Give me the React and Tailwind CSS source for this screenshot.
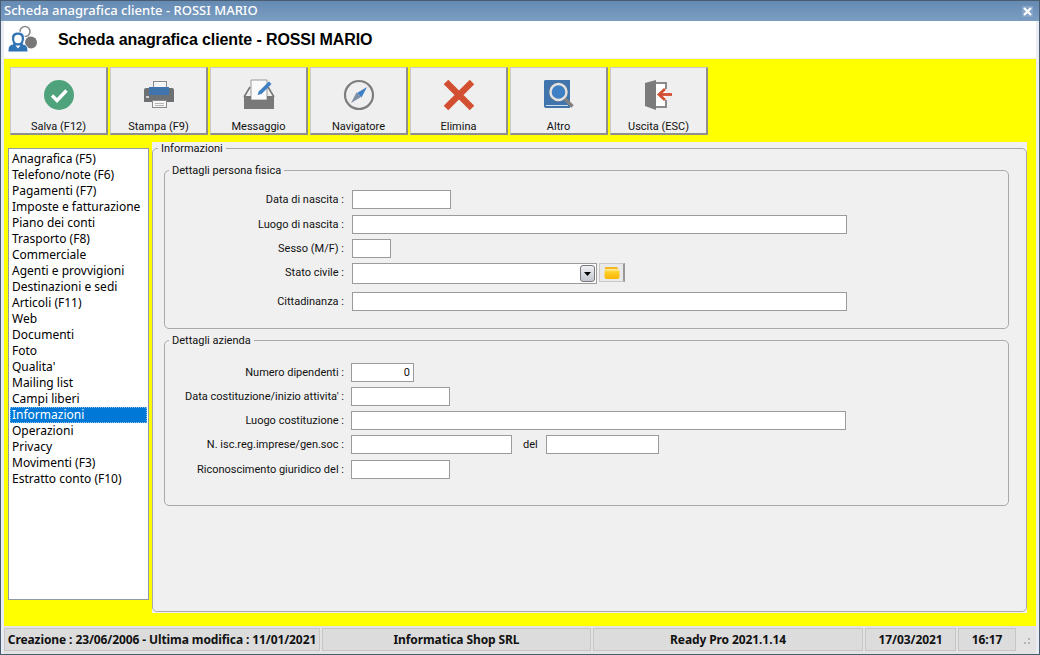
const tahoma = '"Noto Sans", "Liberation Sans", sans-serif';
const narrow = 'Roboto, "Liberation Sans", sans-serif';

function SaveIcon() {
  return (
    <svg width="32" height="32" viewBox="0 0 32 32">
      <circle cx="16" cy="16" r="15" fill="#4fa37c" />
      <path d="M9 16.500l5 5 9.500-10" fill="none" stroke="#fff" strokeWidth="3.4" />
    </svg>
  );
}

function PrintIcon() {
  return (
    <svg width="32" height="32" viewBox="0 0 32 32">
      <rect x="10.500" y="2.500" width="13" height="7" fill="#f6f6f6" stroke="#8a8a8a" />
      <path d="M3 9h26a2 2 0 0 1 2 2v12H1V11a2 2 0 0 1 2-2z" fill="#6e7173" />
      <rect x="6" y="8" width="20" height="8" fill="#3f74ad" />
      <rect x="3" y="17" width="3" height="2" fill="#d0d0d0" />
      <rect x="9.500" y="21.500" width="14" height="7" fill="#f6f6f6" stroke="#8a8a8a" />
      <path d="M12 24.500h9M12 26.500h9" stroke="#b5b5b5" />
    </svg>
  );
}

function MessageIcon() {
  return (
    <svg width="32" height="32" viewBox="0 0 32 32">
      <path d="M8 1h16v20H8z" fill="#fafafa" stroke="#9a9a9a" />
      <path d="M7 8L1 18M25 8l6 10" stroke="#787878" strokeWidth="1.6" />
      <path d="M1 17h7v4h16v-4h7v13H1z" fill="#787878" />
      <path d="M14.500 16l1.200-3.500L26 2.500l2.500 2.500-10 10z" fill="#3f7fc4" />
    </svg>
  );
}

function CompassIcon() {
  return (
    <svg width="32" height="32" viewBox="0 0 32 32">
      <circle cx="16" cy="16" r="14" fill="none" stroke="#7d7d7d" strokeWidth="2.2" />
      <path d="M24 8L18.500 18.500 14 14z" fill="#3f7fc4" />
      <path d="M8 24l5.500-10.500L18 18z" fill="#7d8fa5" />
    </svg>
  );
}

function DeleteIcon() {
  return (
    <svg width="32" height="32" viewBox="0 0 32 32">
      <path d="M3 3l26 26M29 3L3 29" stroke="#d24f31" strokeWidth="6.4" />
    </svg>
  );
}

function OtherIcon() {
  return (
    <svg width="32" height="32" viewBox="0 0 32 32">
      <path d="M2 1h25v28H3a2 2 0 0 1-2-2V2z" fill="#3f74ad" />
      <path d="M3 26.500h22" stroke="#cfdded" />
      <path d="M21.500 19.500l8 8" stroke="#808080" strokeWidth="3.6" />
      <circle cx="15.500" cy="13" r="9.600" fill="#777" />
      <circle cx="15.500" cy="13" r="8" fill="#3f7fc4" stroke="#e2e2e2" strokeWidth="2.400" />
    </svg>
  );
}

function ExitIcon() {
  return (
    <svg width="32" height="32" viewBox="0 0 32 32">
      <path d="M13 4h10v24H13z" fill="#fff" />
      <path d="M13 4h10v6M23 21v7H13" fill="none" stroke="#8a8a8a" strokeWidth="2" />
      <path d="M2 4l11-3v30L2 27z" fill="#7b7b7b" />
      <path d="M29 15.500H18" stroke="#d24f31" strokeWidth="2.8" />
      <path d="M22 10l-6 5.500 6 5.500" fill="none" stroke="#d24f31" strokeWidth="2.8" />
    </svg>
  );
}

function CustomerIcon() {
  return (
    <svg width="30" height="30" viewBox="0 0 30 30" className="block">
      <circle cx="18" cy="6.500" r="5" fill="#fff" stroke="#8a8a8a" strokeWidth="1.600" />
      <path d="M21 12c2 1 3 2 3.500 3" fill="none" stroke="#8a8a8a" strokeWidth="1.400" />
      <circle cx="24" cy="17.500" r="6" fill="#777" />
      <path
        d="M1 27c0-5 1-7 5-8-1-2-1.500-4-1.500-6 0-4 3-6 6.500-6s6.500 2 6.500 6c0 2-.5 4-1.500 6 4 1 5 3 5 8z"
        fill="#2f73b5"
        stroke="#fff"
        strokeWidth="1"
      />
      <ellipse cx="11" cy="14" rx="3.800" ry="4.200" fill="#fff" />
      <path d="M8.500 20.500L11 23.500l2.500-3z" fill="#fff" />
    </svg>
  );
}

function FolderIcon() {
  return (
    <svg width="16" height="12" viewBox="0 0 16 12">
      <defs>
        <linearGradient id="folder" x1="0" y1="0" x2="0" y2="1">
          <stop offset="0" stopColor="#fff0a8" />
          <stop offset="0.3" stopColor="#ffd02a" />
          <stop offset="1" stopColor="#fbb400" />
        </linearGradient>
      </defs>
      <path d="M2 0h10a2 2 0 0 1 2 2v1H1V1a1 1 0 0 1 1-1z" fill="#f2b71c" />
      <rect x="0.500" y="2" width="15" height="10" rx="2.500" fill="url(#folder)" />
    </svg>
  );
}

const tools = [
  { label: 'Salva (F12)', icon: <SaveIcon /> },
  { label: 'Stampa (F9)', icon: <PrintIcon /> },
  { label: 'Messaggio', icon: <MessageIcon /> },
  { label: 'Navigatore', icon: <CompassIcon /> },
  { label: 'Elimina', icon: <DeleteIcon /> },
  { label: 'Altro', icon: <OtherIcon /> },
  { label: 'Uscita (ESC)', icon: <ExitIcon /> },
];

const menu = [
  'Anagrafica (F5)', 'Telefono/note (F6)', 'Pagamenti (F7)', 'Imposte e fatturazione', 'Piano dei conti',
  'Trasporto (F8)', 'Commerciale', 'Agenti e provvigioni', 'Destinazioni e sedi', 'Articoli (F11)', 'Web',
  'Documenti', 'Foto', "Qualita'", 'Mailing list', 'Campi liberi', 'Informazioni', 'Operazioni', 'Privacy',
  'Movimenti (F3)', 'Estratto conto (F10)',
];

function Field({ className = '', children }) {
  return (
    <div className={`h-[19px] bg-white border border-[#9b9b9b] text-[11px] text-right pr-[3px] leading-[17px] shrink-0 ${className}`}>
      {children}
    </div>
  );
}

function Row({ label, className = '', labelClass = 'pt-[2px]', children }) {
  return (
    <div className={`flex items-center ${className}`}>
      <div className={`w-[179px] text-right shrink-0 whitespace-nowrap ${labelClass}`}>{label} :</div>
      {children}
    </div>
  );
}

function Group({ title, className = '', children }) {
  return (
    <fieldset className={`border border-[#a9a9a9] rounded-[5px] ml-[11px] mr-[17px] ${className}`}>
      <legend className="ml-[4px] px-[3px] leading-[13px] text-[#111]">{title}</legend>
      {children}
    </fieldset>
  );
}

function StatusCell({ className = '', children }) {
  return (
    <div className={`h-[23px] flex items-center justify-center bg-[#dcdcdc] border border-[#c6c6c6] whitespace-nowrap shrink-0 ${className}`}>
      {children}
    </div>
  );
}

export default function App() {
  return (
    <div
      className="w-[1040px] h-[655px] flex flex-col bg-[#e9edf2] border border-[#4a5c72] overflow-hidden text-[11px] text-[#111]"
      style={{ fontFamily: narrow }}
    >
      <div
        className="h-[20px] shrink-0 flex items-center justify-between pl-[3px] pr-[6px] bg-gradient-to-b from-[#658bb3] to-[#7b9dc2] text-white text-[13px] font-medium"
        style={{ fontFamily: tahoma }}
      >
        <span>Scheda anagrafica cliente - ROSSI MARIO</span>
        <span className="w-[11px] h-[11px] flex items-center justify-center bg-[#86a5c8]">
          <svg width="9" height="9" viewBox="0 0 9 9">
            <path d="M1 1l7 7M8 1L1 8" stroke="#fff" strokeWidth="2.2" />
          </svg>
        </span>
      </div>

      <div className="h-[37px] shrink-0 flex items-center bg-white mx-[3px] pl-[3px]">
        <CustomerIcon />
        <div
          className="ml-[21px] font-bold text-[16px] tracking-[-0.1px] text-black"
          style={{ fontFamily: '"Liberation Sans", sans-serif' }}
        >
          Scheda anagrafica cliente - ROSSI MARIO
        </div>
      </div>

      <div className="flex-1 min-h-0 mt-[1px] mx-[3px] bg-[#ffff00] flex flex-col pt-[8px]">
        <div className="flex gap-[2px] pl-[6px] h-[68px] shrink-0">
          {tools.map((t) => (
            <div
              key={t.label}
              className="w-[98px] flex flex-col items-center border border-[#c9c9c9] border-r-2 border-b-2 border-r-[#8f8f8f] border-b-[#8f8f8f] bg-[#efefef]"
            >
              <div className="h-[44px] mt-[11px] shrink-0">{t.icon}</div>
              <div className="text-[11px] leading-[13px] -mt-[3px]">{t.label}</div>
            </div>
          ))}
        </div>

        <div className="flex-1 min-h-0 flex mt-[7px] pb-[13px]">
          <div
            className="w-[141px] ml-[4px] mt-[6px] mb-[13px] bg-white border border-[#8f9aa5] pt-[2px] pl-[1px] pr-[1px] shrink-0"
            style={{ fontFamily: tahoma }}
          >
            {menu.map((m) => (
              <div
                key={m}
                className={`h-[16px] leading-[14px] pl-[1px] border border-transparent text-[12px] whitespace-nowrap ${
                  m === 'Informazioni' ? 'bg-[#0078d7] text-white border-dotted !border-[#8dc0ea]' : 'text-black'
                }`}
              >
                {m}
              </div>
            ))}
          </div>

          <div className="w-[875px] ml-[3px] bg-[#f0f0f0] shrink-0">
            <fieldset className="h-[470px] border border-[#a9a9a9] rounded-[5px]">
              <legend className="ml-[5px] px-[3px] leading-[13px]">Informazioni</legend>

              <Group title="Dettagli persona fisica" className="mt-[9px] h-[165px]">
                <div className="flex flex-col pt-[13px]">
                  <Row label="Data di nascita">
                    <Field className="ml-[8px] w-[99px]" />
                  </Row>
                  <Row label="Luogo di nascita" className="mt-[6px]">
                    <Field className="ml-[8px] w-[495px]" />
                  </Row>
                  <Row label="Sesso (M/F)" className="mt-[5px]">
                    <Field className="ml-[8px] w-[39px]" />
                  </Row>
                  <Row label="Stato civile" labelClass="" className="mt-[5px]">
                    <div className="ml-[8px] w-[245px] h-[21px] bg-white border border-[#9b9b9b] flex items-center justify-end pr-[1px]">
                      <div className="w-[15px] h-[17px] rounded-[3px] border border-[#777] bg-gradient-to-b from-[#eef0f4] to-[#c5c8d0] flex items-center justify-center">
                        <svg width="7" height="4" viewBox="0 0 7 4">
                          <path d="M0 0h7L3.500 4z" fill="#000" />
                        </svg>
                      </div>
                    </div>
                    <div className="ml-[2px] w-[26px] h-[19px] mb-[2px] bg-[#e9e9e9] border border-[#c9c9c9] border-r-2 border-r-[#999] flex items-center justify-center">
                      <FolderIcon />
                    </div>
                  </Row>
                  <Row label="Cittadinanza" className="mt-[8px]">
                    <Field className="ml-[8px] w-[495px]" />
                  </Row>
                </div>
              </Group>

              <Group title="Dettagli azienda" className="mt-[5px] h-[172px]">
                <div className="flex flex-col pt-[16px]">
                  <Row label="Numero dipendenti">
                    <Field className="ml-[7px] w-[63px]">0</Field>
                  </Row>
                  <Row label="Data costituzione/inizio attivita'" className="mt-[5px]">
                    <Field className="ml-[7px] w-[99px]" />
                  </Row>
                  <Row label="Luogo costituzione" className="mt-[5px]">
                    <Field className="ml-[7px] w-[495px]" />
                  </Row>
                  <Row label="N. isc.reg.imprese/gen.soc" className="mt-[5px]">
                    <Field className="ml-[7px] w-[161px]" />
                    <span className="ml-[11px] w-[23px] pt-[2px]">del</span>
                    <Field className="w-[113px]" />
                  </Row>
                  <Row label="Riconoscimento giuridico del" className="mt-[6px]">
                    <Field className="ml-[7px] w-[99px]" />
                  </Row>
                </div>
              </Group>
            </fieldset>
          </div>
        </div>
      </div>

      <div
        className="h-[28px] shrink-0 bg-[#e3e3e3] mx-[3px] flex items-start pt-[2px] gap-[2px] font-bold text-[12px] tracking-[-0.1px] text-[#111]"
        style={{ fontFamily: tahoma }}
      >
        <StatusCell className="w-[316px]">Creazione : 23/06/2006 - Ultima modifica : 11/01/2021</StatusCell>
        <StatusCell className="w-[269px]">Informatica Shop SRL</StatusCell>
        <StatusCell className="w-[270px]">Ready Pro 2021.1.14</StatusCell>
        <StatusCell className="w-[91px]">17/03/2021</StatusCell>
        <StatusCell className="w-[58px]">16:17</StatusCell>
        <svg width="12" height="12" viewBox="0 0 12 12" className="ml-[2px] mt-[9px]">
          <path d="M8 1h2v2H8zM4 5h2v2H4zM8 5h2v2H8z" fill="#b5b5b5" />
        </svg>
      </div>
    </div>
  );
}
